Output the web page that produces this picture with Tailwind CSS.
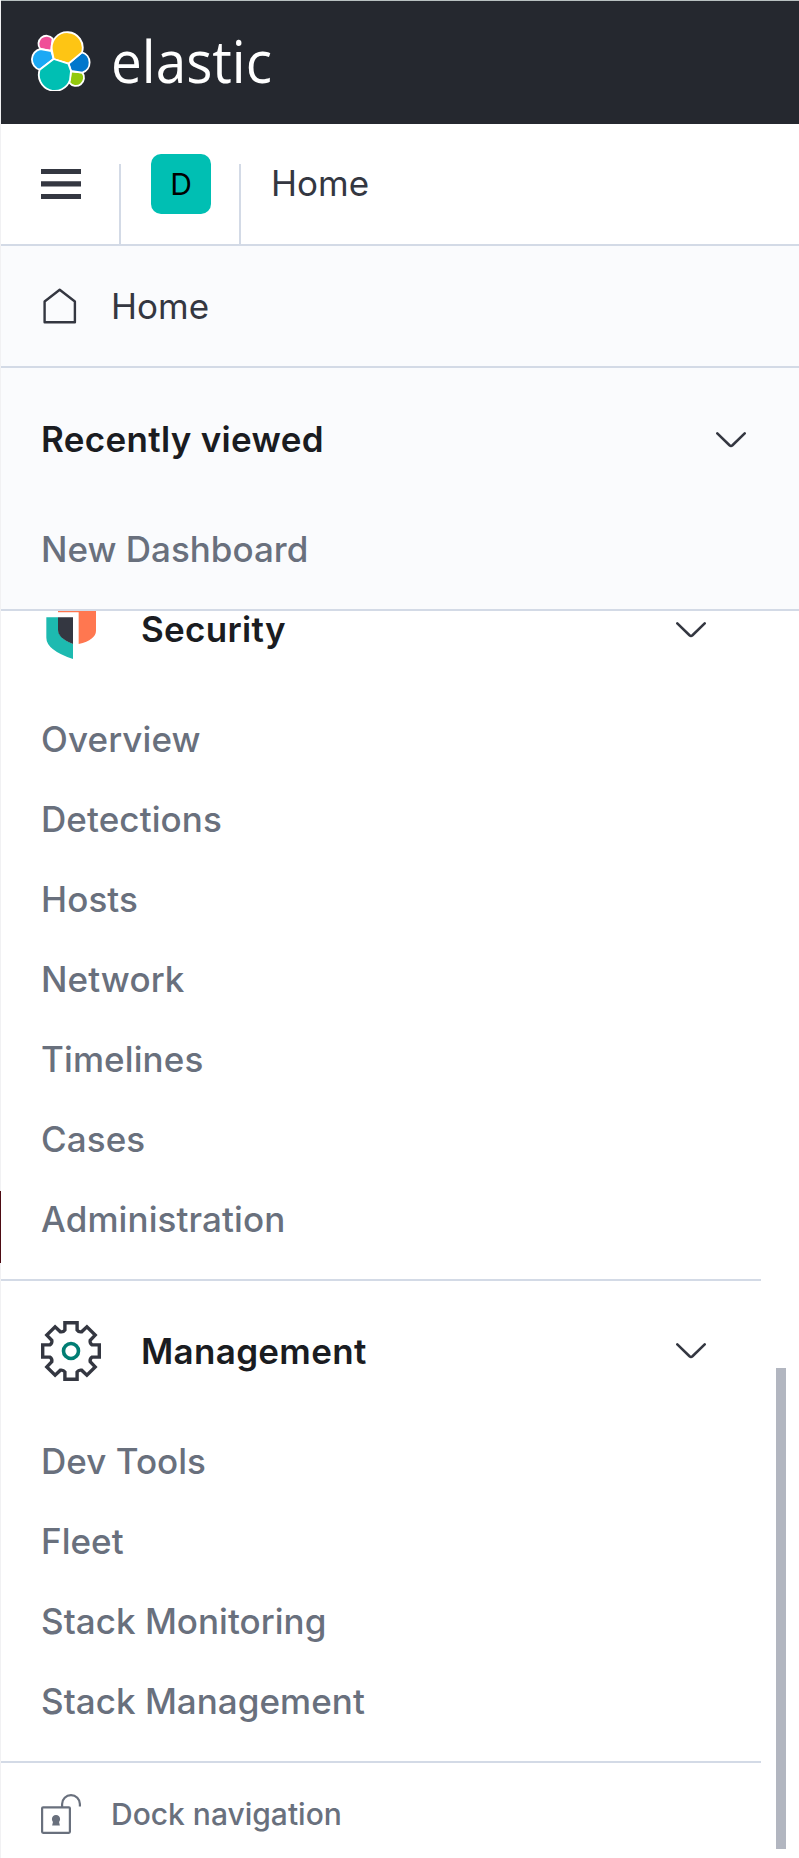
<!DOCTYPE html>
<html lang="en">
<head>
<meta charset="utf-8">
<title>Home - Elastic</title>
<script src="https://cdn.jsdelivr.net/npm/@tailwindcss/browser@4"></script>
</head>
<body class="relative bg-white">
<svg class="hidden">
  <symbol id="chevron" viewBox="0 0 30 16"><path d="M1.300 1.400 13.5 13.2q1.5 1.300 3 0L28.700 1.400" fill="none" stroke="#343741" stroke-width="2.600" stroke-linecap="round"/></symbol>
</svg>
<div class="relative flex h-[1858px] w-[799px] flex-col overflow-hidden border-l border-[#f1f1f3] bg-white font-['Inter','Liberation_Sans',sans-serif] text-[35px] leading-[40px] text-[#343741]">
  <header class="flex h-[124px] shrink-0 items-center border-t border-[#b9c1c1] bg-[#25282f] pb-[3px] pl-[30px]">
    <svg class="h-[60px] w-[60px]" viewBox="93 93 180 180" stroke="#fff" stroke-width="5.500" stroke-linejoin="round">
      <path fill="#f04e98" d="M158 116A22 22 0 1 0 121 147L153 153Z"/>
      <path fill="#1ba9f5" d="M121 147A32 32 0 0 0 119 209L161 177L154 153Z"/>
      <path fill="#93c90e" d="M213 214L208 248A22.500 22.500 0 1 0 247 218Z"/>
      <path fill="#0077cc" d="M246 157L206 191L213 213L247 218A32 32 0 0 0 246 157Z"/>
      <path fill="#fec514" d="M156 152A46.500 46.500 0 1 1 246 157L205 191L161 177Z"/>
      <path fill="#00bfb3" d="M119 209A47.500 47.500 0 1 0 210 240L213 213L205 191L161 177Z"/>
    </svg>
    <svg class="ml-[20px] h-[80px] w-[170px]" viewBox="0 0 170 80"><text x="0" y="62" textLength="161" lengthAdjust="spacingAndGlyphs" fill="#fff" font-family="Open Sans, sans-serif" font-size="58">elastic</text></svg>
  </header>

  <div class="flex h-[122px] shrink-0 items-center border-b-2 border-[#d3dae6]">
    <div class="flex h-full w-[118px] items-center pl-[40px]">
      <svg class="h-[30px] w-[40px]" viewBox="0 0 40 30" fill="#343741"><path d="M0 0h40v5H0zM0 12.300h40v5.200H0zM0 25h40v5H0z"/></svg>
    </div>
    <div class="h-[80px] w-[120px] self-end border-l-2 border-[#d3dae6] pl-[30px]">
      <div class="-mt-[10px] flex h-[60px] w-[60px] items-center justify-center rounded-[10px] bg-[#00bfb3] text-[30px] text-black">D</div>
    </div>
    <div class="h-[80px] self-end border-l-2 border-[#d3dae6] pl-[30px]"><div class="-mt-px h-[40px]">Home</div></div>
  </div>

  <nav class="flex min-h-0 flex-1 flex-col">
    <a class="flex h-[122px] shrink-0 items-center border-b-2 border-[#d3dae6] bg-[#fafbfd] pl-[40px]">
      <svg class="h-[40px] w-[40px]" viewBox="0 0 40 40" fill="none" stroke="#343741" stroke-width="2.400" stroke-linejoin="round"><path d="M3.600 15.500 18.700 3.800 33.900 15.500V36.200H3.600Z"/></svg>
      <span class="ml-[30px]">Home</span>
    </a>
    <section class="flex h-[243px] shrink-0 flex-col border-b-2 border-[#d3dae6] bg-[#fafbfd] pr-[53px] pl-[40px]">
      <div class="mt-[51px] flex items-center justify-between font-semibold tracking-[0.009em] text-[#1a1c21]">
        <h2>Recently viewed</h2><svg class="mt-[2px] h-[16px] w-[30px]"><use href="#chevron"/></svg>
      </div>
      <a class="mt-[70px] font-medium text-[#69707d]">New Dashboard</a>
    </section>

    <section class="h-[670px] w-[760px] shrink-0 border-b-2 border-[#d3dae6] pr-[55px] pl-[40px]">
      <div class="flex h-[49px] items-start font-semibold tracking-[0.009em] text-[#1a1c21]">
        <svg class="h-[49px] w-[60px]" viewBox="123 63 180 147">
          <path fill="#ff7750" d="M174 33H288V122Q288 149 236 162V67H174Z"/>
          <path fill="#1dbab0" d="M139 82H174V120Q176 145 219 162V207Q139 180 139 143Z"/>
          <path fill="#343741" d="M174 82H219V162Q174 145 174 120Z"/>
        </svg>
        <h2 class="ml-[40px] flex-1 leading-[36px]">Security</h2><svg class="mt-[11px] h-[16px] w-[30px]"><use href="#chevron"/></svg>
      </div>
      <div class="mt-[59px] flex flex-col gap-[40px] font-medium tracking-[0.003em] text-[#69707d]">
        <a>Overview</a><a>Detections</a><a>Hosts</a><a>Network</a><a>Timelines</a><a>Cases</a><a>Administration</a>
      </div>
    </section>

    <section class="h-[482px] w-[760px] shrink-0 border-b-2 border-[#d3dae6] pt-[40px] pr-[55px] pl-[40px]">
      <div class="flex h-[60px] items-center font-semibold tracking-[0.009em] text-[#1a1c21]">
        <svg class="h-[60px] w-[60px]" viewBox="-30 -30 60 60" fill="none" stroke="#343741" stroke-width="3.400">
          <path d="M-6.100 -21V-28.300H6.100V-21A4.500 4.500 0 0 0 10.600 -19.200L15.900 -24.200 24.200 -15.900 19.200 -10.600A4.500 4.500 0 0 0 21 -6.100H28.300V6.100H21A4.500 4.500 0 0 0 19.200 10.600L24.200 15.900 15.900 24.200 10.600 19.200A4.500 4.500 0 0 0 6.100 21V28.300H-6.100V21A4.500 4.500 0 0 0 -10.600 19.200L-15.900 24.200 -24.200 15.900 -19.200 10.600A4.500 4.500 0 0 0 -21 6.100H-28.300V-6.100H-21A4.500 4.500 0 0 0 -19.200 -10.600L-24.200 -15.900 -15.900 -24.200 -10.600 -19.200A4.500 4.500 0 0 0 -6.100 -21Z"/>
          <circle r="7.500" stroke="#017d73" stroke-width="3.600"/>
        </svg>
        <h2 class="ml-[40px] flex-1">Management</h2><svg class="h-[16px] w-[30px]"><use href="#chevron"/></svg>
      </div>
      <div class="mt-[60px] flex flex-col gap-[40px] font-medium tracking-[0.001em] text-[#69707d]">
        <a>Dev Tools</a><a>Fleet</a><a>Stack Monitoring</a><a>Stack Management</a>
      </div>
    </section>

    <a class="mt-[31px] flex h-[40px] items-center pl-[40px] text-[30px] font-medium text-[#69707d]">
      <svg class="h-[40px] w-[40px]" viewBox="0 0 40 40" fill="none" stroke="#69707d" stroke-width="2.200"><rect x="1.100" y="13.300" width="27.800" height="25.500" rx="1"/><path d="M21.100 13V10A8.900 8.900 0 0 1 38.900 10V12.500"/><path d="M12.500 30.500 13.200 27.500A3 3 0 1 1 16.800 27.500L17.500 30.500Z" fill="#69707d"/></svg>
      <span class="ml-[30px]">Dock navigation</span>
    </a>
  </nav>

  <div class="absolute top-[1368px] left-[775px] h-[481px] w-[10px] bg-[#b2b6c0]"></div>
</div>
<div class="absolute top-[1191px] left-0 h-[72px] w-px bg-[#4d0b13]"></div>
</body>
</html>
